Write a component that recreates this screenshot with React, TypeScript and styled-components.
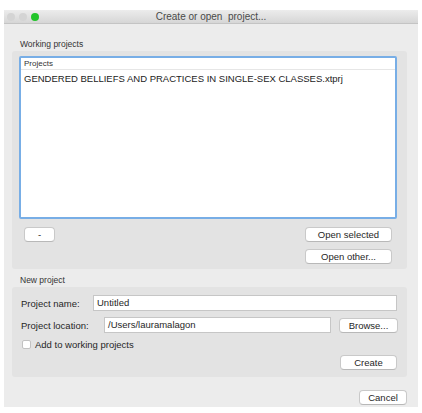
import React from 'react';
import styled, { createGlobalStyle } from 'styled-components';

const GlobalStyle = createGlobalStyle`
  html, body {
    margin: 0;
    background: #ffffff;
    font-family: "Liberation Sans", Arial, sans-serif;
    color: #262626;
  }
`;

const Window = styled.div`
  width: 414px;
  margin: 10px 0 0 4px;
  display: flex;
  flex-direction: column;
  background: #ececec;
`;

const TitleBar = styled.div`
  height: 13px;
  display: flex;
  align-items: center;
  position: relative;
  background: linear-gradient(#ececec, #d6d6d6);
  border-bottom: 1px solid #c4c4c4;
`;

const Lights = styled.div`
  display: flex;
  gap: 4px;
  padding-left: 3px;
`;

const Light = styled.span<{ $color: string }>`
  width: 8px;
  height: 8px;
  border-radius: 50%;
  background: ${(p) => p.$color};
`;

const Title = styled.div`
  position: absolute;
  left: 0;
  right: 0;
  text-align: center;
  font-size: 10px;
  color: #4a4a4a;
  white-space: pre;
`;

const Body = styled.div`
  display: flex;
  flex-direction: column;
  padding: 14px 11px 2px 8px;
`;

const SectionLabel = styled.div<{ $top?: number }>`
  font-size: 8.5px;
  color: #333;
  padding-left: 8px;
  height: 12px;
  line-height: 12px;
  margin: ${(p) => p.$top ?? 0}px 0 1px;
`;

const Group = styled.div<{ $bottom: number }>`
  background: #e3e3e3;
  border-radius: 3px;
  display: flex;
  flex-direction: column;
  padding-bottom: ${(p) => p.$bottom}px;
`;

const ProjectList = styled.div`
  margin: 5px 10px 0 7px;
  height: 159px;
  border: 2px solid #78aee6;
  border-radius: 2px;
  background: #fff;
  display: flex;
  flex-direction: column;
`;

const ListHeader = styled.div`
  font-size: 8px;
  height: 11px;
  line-height: 11px;
  padding-left: 3px;
  border-bottom: 1px solid #e6e6e6;
  color: #333;
`;

const ListItem = styled.div`
  font-size: 9.5px;
  padding: 3px 0 0 3px;
  color: #222;
  white-space: nowrap;
`;

const ButtonRow = styled.div<{ $top: number }>`
  display: flex;
  justify-content: flex-end;
  align-items: center;
  margin-top: ${(p) => p.$top}px;
  padding: 0 15px 0 12px;
`;

const Button = styled.button<{ $w: number; $left?: boolean }>`
  width: ${(p) => p.$w}px;
  height: 15px;
  padding: 0;
  margin-right: ${(p) => (p.$left ? 'auto' : '0')};
  border: 1px solid #c9c9c9;
  border-bottom-color: #b8b8b8;
  border-radius: 4px;
  background: #fff;
  font-family: "Liberation Sans", Arial, sans-serif;
  font-size: 9.5px;
  color: #262626;
  line-height: 13px;
  flex: none;
`;

const FormRow = styled.div<{ $top: number; $end?: boolean }>`
  display: flex;
  align-items: center;
  justify-content: ${(p) => (p.$end ? 'flex-end' : 'flex-start')};
  margin-top: ${(p) => p.$top}px;
  padding: 0 10px 0 9px;
  font-size: 9.5px;
`;

const FieldLabel = styled.label<{ $w: number }>`
  width: ${(p) => p.$w}px;
  flex: none;
  color: #262626;
`;

const TextInput = styled.div<{ $w?: number }>`
  flex: ${(p) => (p.$w ? 'none' : '1')};
  width: ${(p) => (p.$w ? `${p.$w}px` : 'auto')};
  margin-right: ${(p) => (p.$w ? '8px' : '0')};
  height: 16px;
  border: 1px solid #c6c6c6;
  background: #fff;
  font-size: 9.5px;
  line-height: 14px;
  padding-left: 3px;
  box-sizing: border-box;
`;

const CheckBox = styled.span`
  width: 9px;
  height: 9px;
  border: 1px solid #c2c2c2;
  border-radius: 2px;
  background: #fff;
  margin: 0 4px 0 1px;
  box-sizing: border-box;
`;

const BottomRow = styled.div`
  display: flex;
  justify-content: flex-end;
  margin-top: 13px;
`;

export default function App() {
  return (
    <>
      <GlobalStyle />
      <Window>
        <TitleBar>
          <Lights>
            <Light $color="#d4d4d4" />
            <Light $color="#d4d4d4" />
            <Light $color="#22c42a" />
          </Lights>
          <Title>Create or open  project...</Title>
        </TitleBar>
        <Body>
          <SectionLabel>Working projects</SectionLabel>
          <Group $bottom={5}>
            <ProjectList>
              <ListHeader>Projects</ListHeader>
              <ListItem>GENDERED BELLIEFS AND PRACTICES IN SINGLE-SEX CLASSES.xtprj</ListItem>
            </ProjectList>
            <ButtonRow $top={8}>
              <Button $w={31} $left>-</Button>
              <Button $w={87}>Open selected</Button>
            </ButtonRow>
            <ButtonRow $top={7}>
              <Button $w={87}>Open other...</Button>
            </ButtonRow>
          </Group>

          <SectionLabel $top={5}>New project</SectionLabel>
          <Group $bottom={7}>
            <FormRow $top={8}>
              <FieldLabel $w={72}>Project name:</FieldLabel>
              <TextInput>Untitled</TextInput>
            </FormRow>
            <FormRow $top={6}>
              <FieldLabel $w={83}>Project location:</FieldLabel>
              <TextInput $w={227}>/Users/lauramalagon</TextInput>
              <Button $w={59}>Browse...</Button>
            </FormRow>
            <FormRow $top={6}>
              <CheckBox />
              <span>Add to working projects</span>
            </FormRow>
            <FormRow $top={5} $end>
              <Button $w={57}>Create</Button>
            </FormRow>
          </Group>
          <BottomRow>
            <Button $w={48}>Cancel</Button>
          </BottomRow>
        </Body>
      </Window>
    </>
  );
}
